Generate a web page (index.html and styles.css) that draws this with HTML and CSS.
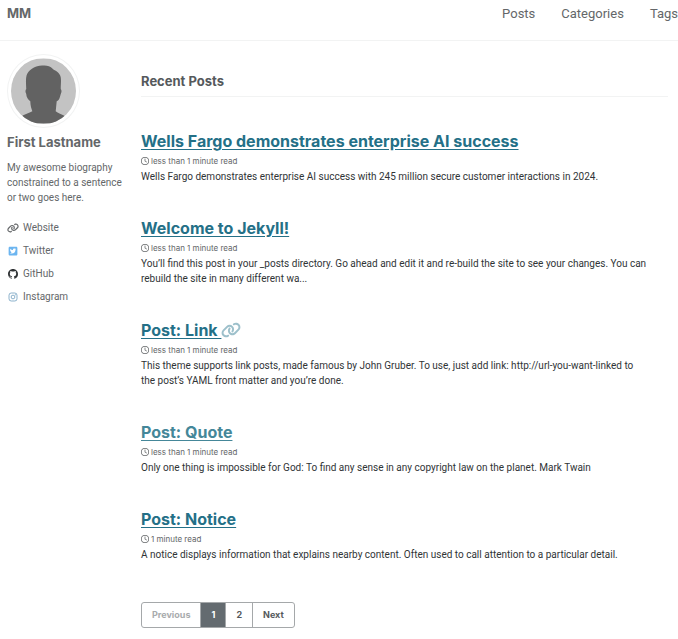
FILE: index.html
```html
<!DOCTYPE html>
<html lang="en">
<head>
  <meta charset="UTF-8" />
  <meta name="viewport" content="width=device-width, initial-scale=1.0" />
  <title>MM</title>
  <link rel="stylesheet" href="styles.css">
</head>
<body>
  <!-- shared icons -->
  <svg class="icon-defs" aria-hidden="true">
    <symbol id="icon-link" viewBox="0 0 640 512"><path d="M579.8 267.7c56.5-56.5 56.5-148 0-204.5c-50-50-128.8-56.5-186.3-15.4l-1.6 1.1c-14.4 10.3-17.7 30.3-7.4 44.6s30.3 17.7 44.6 7.4l1.6-1.1c32.1-22.9 76-19.3 103.8 8.6c31.5 31.5 31.5 82.5 0 114L422.3 334.8c-31.5 31.5-82.5 31.5-114 0c-27.9-27.9-31.5-71.8-8.6-103.8l1.1-1.6c10.3-14.4 6.9-34.4-7.4-44.6s-34.4-6.9-44.6 7.4l-1.1 1.6C206.5 251.2 213 330 263 380c56.5 56.5 148 56.5 204.5 0L579.8 267.7zM60.2 244.3c-56.5 56.5-56.5 148 0 204.5c50 50 128.8 56.5 186.3 15.4l1.6-1.1c14.4-10.3 17.7-30.3 7.4-44.6s-30.3-17.7-44.6-7.4l-1.6 1.1c-32.1 22.9-76 19.3-103.8-8.6C74 372 74 321 105.5 289.5L217.7 177.2c31.5-31.5 82.5-31.5 114 0c27.9 27.9 31.5 71.8 8.6 103.9l-1.1 1.6c-10.3 14.4-6.9 34.4 7.4 44.6s34.4 6.9 44.6-7.4l1.1-1.6C433.5 260.8 427 182 377 132c-56.5-56.5-148-56.5-204.5 0L60.2 244.3z"/></symbol>
    <symbol id="icon-clock" viewBox="0 0 512 512"><path d="M464 256A208 208 0 1 1 48 256a208 208 0 1 1 416 0zM0 256a256 256 0 1 0 512 0A256 256 0 1 0 0 256zM232 120V256c0 8 4 15.5 10.7 20l96 64c11 7.4 25.9 4.4 33.3-6.7s4.4-25.9-6.7-33.3L280 243.2V120c0-13.3-10.7-24-24-24s-24 10.7-24 24z"/></symbol>
    <symbol id="icon-twitter" viewBox="0 0 448 512"><path d="M64 32C28.7 32 0 60.7 0 96V416c0 35.3 28.7 64 64 64H384c35.3 0 64-28.7 64-64V96c0-35.3-28.7-64-64-64H64zM351.3 199.3v0c0 86.7-66 186.6-186.6 186.6c-37.2 0-71.7-10.8-100.7-29.4c5.3 .6 10.4 .8 15.8 .8c30.7 0 58.9-10.4 81.4-28c-28.8-.6-53-19.5-61.3-45.5c10.1 1.5 19.2 1.5 29.6-1.2c-30-6.1-52.5-32.5-52.5-64.4v-.8c8.7 4.9 18.9 7.9 29.6 8.3c-9-6-16.4-14.1-21.5-23.6s-7.8-20.2-7.7-31c0-12.2 3.2-23.4 8.9-33.1c32.3 39.8 80.8 65.8 135.2 68.6c-9.3-44.5 24-80.6 64-80.6c18.9 0 35.9 7.9 47.9 20.7c14.8-2.8 29-8.3 41.6-15.8c-4.9 15.2-15.2 28-28.8 36.1c13.2-1.4 26-5.1 37.8-10.2c-8.9 13.1-20.1 24.7-32.9 34c.2 2.8 .2 5.7 .2 8.5z"/></symbol>
    <symbol id="icon-github" viewBox="0 0 16 16"><path d="M8 0C3.58 0 0 3.58 0 8c0 3.54 2.29 6.53 5.47 7.59.4.07.55-.17.55-.38 0-.19-.01-.82-.01-1.49-2.01.37-2.53-.49-2.69-.94-.09-.23-.48-.94-.82-1.13-.28-.15-.68-.52-.01-.53.63-.01 1.08.58 1.23.82.72 1.21 1.87.87 2.33.66.07-.52.28-.87.51-1.07-1.78-.2-3.64-.89-3.64-3.95 0-.87.31-1.59.82-2.15-.08-.2-.36-1.02.08-2.12 0 0 .67-.21 2.2.82.64-.18 1.32-.27 2-.27s1.36.09 2 .27c1.53-1.04 2.2-.82 2.2-.82.44 1.1.16 1.92.08 2.12.51.56.82 1.27.82 2.15 0 3.07-1.87 3.75-3.65 3.95.29.25.54.73.54 1.48 0 1.07-.01 1.93-.01 2.2 0 .21.15.46.55.38A8.01 8.01 0 0 0 16 8c0-4.42-3.58-8-8-8z"/></symbol>
    <symbol id="icon-instagram" viewBox="0 0 448 512"><g fill="none" stroke="currentColor" stroke-width="40"><rect x="20" y="52" width="408" height="408" rx="112"/><circle cx="224" cy="256" r="95"/></g><circle cx="344" cy="136" r="27"/></symbol>
  </svg>

  <header class="masthead">
    <a href="#" class="site-title">MM</a>
    <nav class="site-nav">
      <a href="#">Posts</a>
      <a href="#">Categories</a>
      <a href="#">Tags</a>
    </nav>
  </header>

  <div class="page">
    <aside class="sidebar">
      <svg class="avatar" viewBox="0 0 64 64" role="img" aria-label="First Lastname">
        <rect width="64" height="64" fill="#c3c3c3"/>
        <path fill="#626262" d="M33 7C25 6 19 10 16 15C14 19 15 25 15 30C14 31 14 33 15 35C15 38 17 41 19 42C19 46 20 49 21 52C18 54 13 55 10 57L8 64H56L54 57C50 55 46 54 44 52L45 42C48 41 48 38 49 35C50 33 50 31 49 30C49 25 50 19 48 16C46 12 43 12 41 10C39 8 36 7 33 7Z"/>
      </svg>
      <h3 class="author-name">First Lastname</h3>
      <p class="author-bio">My awesome biography constrained to a sentence or two goes here.</p>
      <ul class="author-links">
        <li><a href="#"><svg class="icon"><use href="#icon-link"/></svg>Website</a></li>
        <li><a href="#"><svg class="icon twitter"><use href="#icon-twitter"/></svg>Twitter</a></li>
        <li><a href="#"><svg class="icon github"><use href="#icon-github"/></svg>GitHub</a></li>
        <li><a href="#"><svg class="icon instagram"><use href="#icon-instagram"/></svg>Instagram</a></li>
      </ul>
    </aside>

    <main class="archive">
      <h3 class="archive-subtitle">Recent Posts</h3>

      <article class="post">
        <h2 class="post-title"><a href="#">Wells Fargo demonstrates enterprise AI success</a></h2>
        <p class="post-meta"><svg class="clock"><use href="#icon-clock"/></svg>less than 1 minute read</p>
        <p class="post-excerpt">Wells Fargo demonstrates enterprise AI success with 245 million secure customer interactions in 2024.</p>
      </article>

      <article class="post">
        <h2 class="post-title"><a href="#">Welcome to Jekyll!</a></h2>
        <p class="post-meta"><svg class="clock"><use href="#icon-clock"/></svg>less than 1 minute read</p>
        <p class="post-excerpt">You’ll find this post in your _posts directory. Go ahead and edit it and re-build the site to see your changes. You can rebuild the site in many different wa...</p>
      </article>

      <article class="post">
        <h2 class="post-title"><a href="#">Post: Link </a><a href="#" class="permalink" aria-label="Permalink"><svg><use href="#icon-link"/></svg></a></h2>
        <p class="post-meta"><svg class="clock"><use href="#icon-clock"/></svg>less than 1 minute read</p>
        <p class="post-excerpt">This theme supports link posts, made famous by John Gruber. To use, just add link: http://url-you-want-linked to the&nbsp;post’s YAML front matter and you’re done.</p>
      </article>

      <article class="post">
        <h2 class="post-title"><a href="#" class="visited">Post: Quote</a></h2>
        <p class="post-meta"><svg class="clock"><use href="#icon-clock"/></svg>less than 1 minute read</p>
        <p class="post-excerpt">Only one thing is impossible for God: To find any sense in any copyright law on the planet. Mark Twain</p>
      </article>

      <article class="post">
        <h2 class="post-title"><a href="#">Post: Notice</a></h2>
        <p class="post-meta"><svg class="clock"><use href="#icon-clock"/></svg>1 minute read</p>
        <p class="post-excerpt">A notice displays information that explains nearby content. Often used to call attention to a particular detail.</p>
      </article>

      <nav class="pagination">
        <a href="#" class="disabled">Previous</a>
        <a href="#" class="current">1</a>
        <a href="#">2</a>
        <a href="#">Next</a>
      </nav>
    </main>
  </div>
</body>
</html>
```
FILE: styles.css
```css
* {
  box-sizing: border-box;
}
body {
  margin: 0;
  font-family: Roboto, "Liberation Sans", sans-serif;
  font-size: 10px;
  line-height: 15px;
  color: #303436;
  background: #fff;
}
h2, h3, p, ul {
  margin: 0;
  padding: 0;
}
a {
  color: inherit;
}
svg {
  fill: currentColor;
}
.icon-defs {
  display: none;
}

/* header */
.masthead {
  display: flex;
  justify-content: space-between;
  padding: 4px 0 17px 7px;
  border-bottom: 1px solid #f2f3f3;
  font-size: 13px;
  line-height: 19px;
  color: #646769;
}
.masthead a {
  text-decoration: none;
}
.site-title {
  font-family: Inter, sans-serif;
  font-weight: 700;
}
.site-nav {
  display: flex;
  gap: 26px;
}

.page {
  display: grid;
  grid-template-columns: 122px 1fr;
  gap: 12px;
  padding: 13px 10px 10px 7px;
}

/* author profile */
.sidebar {
  color: #646769;
}
.avatar {
  display: block;
  width: 73px;
  height: 74px;
  padding: 3px;
  border: 1px solid #f2f3f3;
  border-radius: 50%;
}
.author-name {
  margin-top: 5px;
  font-family: Inter, sans-serif;
  font-size: 13px;
  line-height: 18px;
}
.author-bio {
  margin-top: 9px;
}
.author-links {
  margin-top: 15px;
  list-style: none;
}
.author-links li {
  margin-bottom: 8px;
}
.author-links a {
  display: flex;
  align-items: center;
  gap: 4px;
  text-decoration: none;
}
.icon {
  width: 12px;
  height: 10px;
}
.twitter {
  color: #6cb5f0;
}
.github {
  color: #303335;
}
.instagram {
  color: #6d9cbe;
}

/* posts */
.archive-subtitle {
  margin-top: 18px;
  padding-bottom: 5px;
  border-bottom: 1px solid #f2f3f3;
  font-family: Inter, sans-serif;
  font-size: 13px;
  line-height: 19px;
  color: #55595c;
}
.post {
  margin-top: 32px;
}
.post-title {
  font-family: Inter, sans-serif;
  font-size: 16px;
  line-height: 24px;
  color: #247087;
}
.post-title a {
  text-underline-offset: 2px;
}
.post-title .visited {
  color: #458799;
}
.permalink svg {
  width: 20px;
  height: 16px;
  vertical-align: -2px;
  color: #9dc0cb;
}
.post-meta {
  display: flex;
  align-items: center;
  gap: 2px;
  font-family: Inter, sans-serif;
  font-size: 8px;
  line-height: 16px;
  color: #646769;
}
.clock {
  width: 8px;
  height: 8px;
}

/* pagination */
.pagination {
  display: inline-flex;
  margin-top: 40px;
  border: 1px solid #a5a8aa;
  border-radius: 3px;
  font-family: Inter, sans-serif;
  font-size: 9px;
  font-weight: 700;
  line-height: 24px;
  color: #55595c;
}
.pagination a {
  padding: 0 10px;
  text-decoration: none;
}
.pagination a + a {
  border-left: 1px solid #a5a8aa;
}
.pagination .disabled {
  color: #a8abad;
}
.pagination .current {
  background: #646b70;
  color: #fff;
}
```
